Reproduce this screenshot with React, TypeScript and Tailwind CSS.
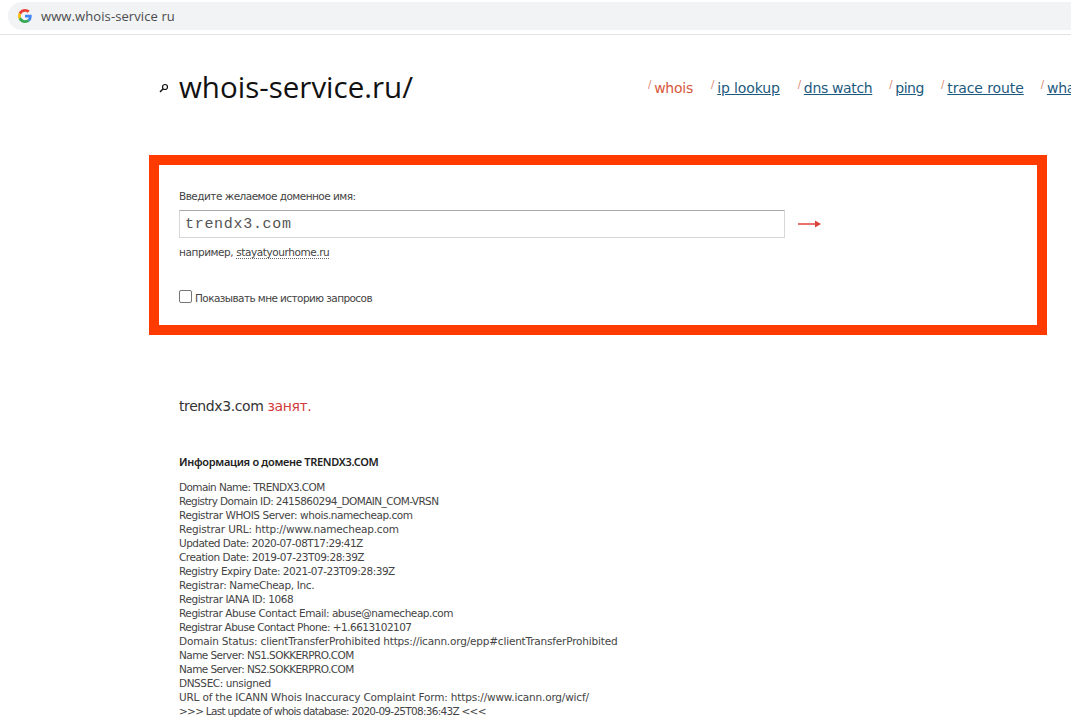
const lines: [string, string][] = [
  ["Domain Name: TRENDX3.COM", "tracking-[-0.6px]"],
  ["Registry Domain ID: 2415860294_DOMAIN_COM-VRSN", "tracking-[-0.58px]"],
  ["Registrar WHOIS Server: whois.namecheap.com", "tracking-[-0.44px]"],
  ["Registrar URL: http://www.namecheap.com", "tracking-[-0.17px]"],
  ["Updated Date: 2020-07-08T17:29:41Z", "tracking-[-0.53px]"],
  ["Creation Date: 2019-07-23T09:28:39Z", "tracking-[-0.47px]"],
  ["Registry Expiry Date: 2021-07-23T09:28:39Z", "tracking-[-0.49px]"],
  ["Registrar: NameCheap, Inc.", "tracking-[-0.35px]"],
  ["Registrar IANA ID: 1068", "tracking-[-0.44px]"],
  ["Registrar Abuse Contact Email: abuse@namecheap.com", "tracking-[-0.45px]"],
  ["Registrar Abuse Contact Phone: +1.6613102107", "tracking-[-0.53px]"],
  ["Domain Status: clientTransferProhibited https://icann.org/epp#clientTransferProhibited", "tracking-[-0.19px]"],
  ["Name Server: NS1.SOKKERPRO.COM", "tracking-[-0.58px]"],
  ["Name Server: NS2.SOKKERPRO.COM", "tracking-[-0.58px]"],
  ["DNSSEC: unsigned", "tracking-[-0.41px]"],
  ["URL of the ICANN Whois Inaccuracy Complaint Form: https://www.icann.org/wicf/", "tracking-[-0.18px]"],
  [">>> Last update of whois database: 2020-09-25T08:36:43Z <<<", "tracking-[-0.72px]"],
];

const nav: { label: string; cls: string; active?: boolean }[] = [
  { label: "whois", cls: "tracking-[-0.25px]", active: true },
  { label: "ip lookup", cls: "ml-[18px] tracking-[-0.12px]" },
  { label: "dns watch", cls: "ml-[18px] tracking-[-0.35px]" },
  { label: "ping", cls: "ml-[17px] tracking-[-0.45px]" },
  { label: "trace route", cls: "ml-[17px] tracking-[-0.1px]" },
  { label: "what is my ip", cls: "ml-[17px] tracking-[-0.2px]" },
];

export default function App() {
  return (
    <div className="h-[723px] w-[1071px] overflow-hidden bg-white font-['DejaVu_Sans',sans-serif] text-[#333]">
      <div className="h-[35px] border-b border-[#e3e4e6] pl-[8px] pt-[2px]">
        <div className="flex h-[28px] items-center rounded-l-[14px] bg-[#f1f3f4] pl-[10px]">
          <svg width="14" height="14" viewBox="0 0 48 48" className="shrink-0">
            <path fill="#EA4335" d="M24 9.5c3.5 0 6.700 1.200 9.200 3.600l6.900-6.900C35.900 2.400 30.500 0 24 0 14.600 0 6.500 5.400 2.600 13.200l8 6.200C12.500 13.700 17.800 9.500 24 9.500z" />
            <path fill="#4285F4" d="M46.900 24.500c0-1.600-.1-3.100-.4-4.500H24v9h12.900c-.6 3-2.200 5.500-4.700 7.200l7.700 6c4.500-4.200 7-10.300 7-17.700z" />
            <path fill="#FBBC05" d="M10.500 28.600c-.5-1.500-.8-3-.8-4.600s.3-3.100.8-4.600l-8-6.200C.9 16.500 0 20.100 0 24s.9 7.500 2.600 10.800l7.900-6.200z" />
            <path fill="#34A853" d="M24 48c6.500 0 11.900-2.100 15.900-5.800l-7.700-6c-2.200 1.400-4.900 2.300-8.200 2.300-6.200 0-11.500-4.200-13.400-9.900l-8 6.200C6.500 42.600 14.600 48 24 48z" />
          </svg>
          <span className="ml-[9px] font-['Open_Sans',sans-serif] text-[13px] leading-none tracking-[0.1px] text-[#4a4b4d]">www.whois-service ru</span>
        </div>
      </div>

      <header className="flex h-[120px] items-start whitespace-nowrap pl-[159px]">
        <svg width="10" height="10" viewBox="0 0 10 10" className="mt-[48px] shrink-0" fill="none" stroke="#111">
          <circle cx="6" cy="4" r="2.500" strokeWidth="1.200" />
          <path d="M4.200 5.800 1 9" strokeWidth="1.500" />
        </svg>
        <h1 className="ml-[10px] mt-[30px] w-[233px] shrink-0 font-['Open_Sans',sans-serif] text-[29.500px] font-normal leading-[44px] text-[#111]">whois-service.ru/</h1>
        <nav className="ml-[236px] mt-[43px] flex font-['DejaVu_Sans',sans-serif] text-[14px] leading-[20px]">
          {nav.map((n) => (
            <span key={n.label} className={`${n.cls} flex shrink-0`}>
              <span className="mr-[3px] text-[10px] leading-[14px] text-[#d9826b]">/</span>
              <span className={n.active ? "text-[#d5573b]" : "text-[#1d5a80] underline"}>{n.label}</span>
            </span>
          ))}
        </nav>
      </header>

      <section className="ml-[149px] h-[180px] w-[898px] border-[10px] border-[#ff3b00] pl-[20px] pt-[24px] font-['DejaVu_Sans',sans-serif] text-[10.500px] text-[#444]">
        <div className="leading-[14px] tracking-[-0.52px]">Введите желаемое доменное имя:</div>
        <div className="mt-[7px] flex items-center">
          <input
            readOnly
            value="trendx3.com"
            className="h-[28px] w-[606px] border border-[#d8d8d8] border-t-[#a9a9a9] pl-[5px] font-['Liberation_Mono',monospace] text-[15px] tracking-[0.7px] text-[#555] outline-none"
          />
          <svg width="24" height="12" viewBox="0 0 24 12" className="ml-[13px]" fill="none">
            <path d="M0 6h20" stroke="#e4625a" strokeWidth="1.800" />
            <path d="M17 2.500 23 6l-6 3.500z" fill="#d9443c" />
          </svg>
        </div>
        <div className="mt-[6px] leading-[16px] tracking-[-0.42px]">
          например, <span className="border-b border-dotted border-[#666]">stayatyourhome.ru</span>
        </div>
        <label className="mt-[30px] flex items-start leading-[14px] tracking-[-0.58px]">
          <span className="block h-[13px] w-[13px] shrink-0 rounded-[2px] border border-[#767676] bg-white" />
          <span className="ml-[3px] mt-[1px]">Показывать мне историю запросов</span>
        </label>
      </section>

      <main className="pl-[179px]">
        <p className="mt-[61px] font-['DejaVu_Sans',sans-serif] text-[14px] leading-[20px] tracking-[-0.4px] text-[#333]">
          trendx3.com <span className="text-[#d23b3b]">занят.</span>
        </p>
        <h2 className="mt-[39px] font-['Noto_Sans',sans-serif] text-[11px] font-semibold leading-[14px] tracking-[-0.3px] text-[#222]">Информация о домене TRENDX3.COM</h2>
        <div className="mt-[11px] whitespace-pre font-['DejaVu_Sans',sans-serif] text-[10.500px] leading-[14px] text-[#444]">
          {lines.map(([t, c]) => (
            <div key={t} className={c}>{t}</div>
          ))}
        </div>
      </main>
    </div>
  );
}
